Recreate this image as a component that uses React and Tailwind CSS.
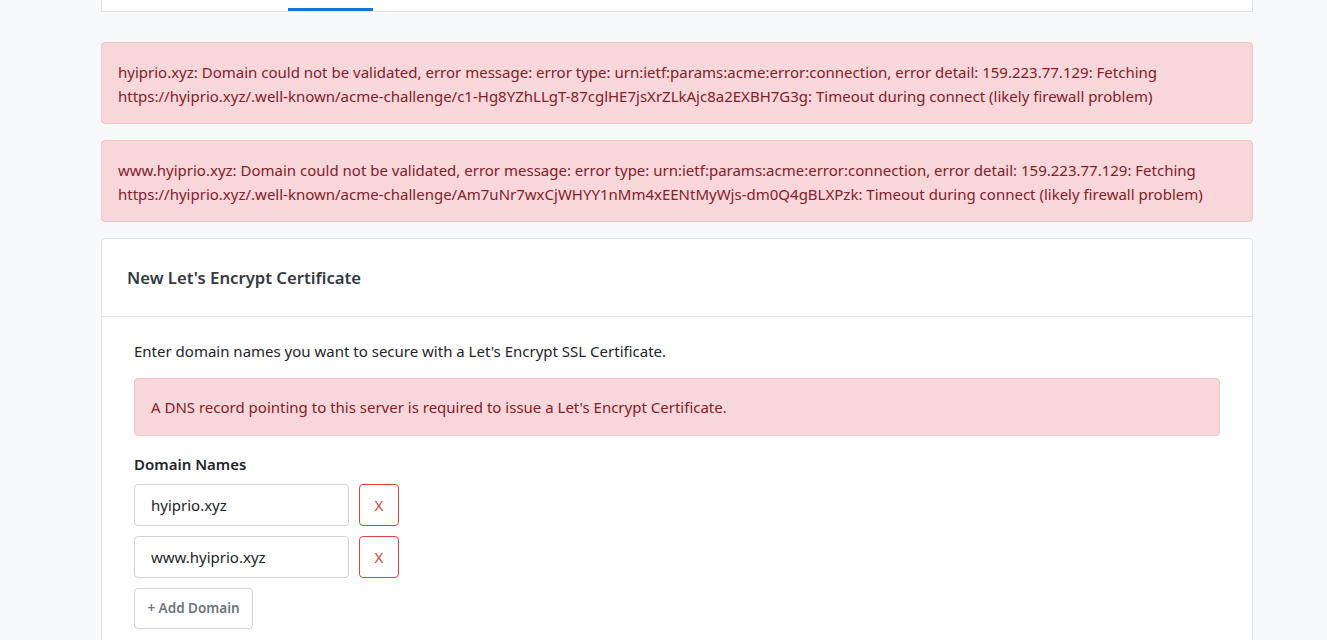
import React from "react";

const font = { fontFamily: '"Noto Sans", "Open Sans", Arial, sans-serif' };

function Alert({ children, className = "" }) {
  return (
    <div className={`rounded border border-[#f5c2c7] bg-[#f8d7da] text-[#842029] ${className}`}>
      {children}
    </div>
  );
}

export default function App() {
  return (
    <div className="min-h-[640px] h-[640px] overflow-hidden bg-[#f8f9fb] text-[#212529]" style={font}>
      <div className="mx-[101px] w-[1152px]">
        <div className="h-[12px] border-x border-b border-[#dee2e6] bg-white flex">
          <div className="ml-[186px] w-[85px] h-[3px] mt-[8px] bg-[#1a73d0]"></div>
        </div>

        <Alert className="mt-[30px] px-[16px] pt-[17px] pb-[15px] text-[15px] leading-[24px]">
          hyiprio.xyz: Domain could not be validated, error message: error type: urn:ietf:params:acme:error:connection, error detail: 159.223.77.129: Fetching
          <br />
          https://hyiprio.xyz/.well-known/acme-challenge/c1-Hg8YZhLLgT-87cglHE7jsXrZLkAjc8a2EXBH7G3g: Timeout during connect (likely firewall problem)
        </Alert>

        <Alert className="mt-[16px] px-[16px] pt-[17px] pb-[15px] text-[15px] leading-[24px]">
          www.hyiprio.xyz: Domain could not be validated, error message: error type: urn:ietf:params:acme:error:connection, error detail: 159.223.77.129: Fetching
          <br />
          https://hyiprio.xyz/.well-known/acme-challenge/Am7uNr7wxCjWHYY1nMm4xEENtMyWjs-dm0Q4gBLXPzk: Timeout during connect (likely firewall problem)
        </Alert>

        <div className="mt-[16px] rounded-t border border-[#dee2e6] bg-white h-[410px]">
          <div className="h-[78px] border-b border-[#dee2e6] px-[25px] flex items-center">
            <h2 className="text-[16.7px] font-semibold text-[#343a40]">New Let's Encrypt Certificate</h2>
          </div>
          <div className="px-[32px] pt-[23px]">
            <p className="text-[15px] leading-[22px]">
              Enter domain names you want to secure with a Let's Encrypt SSL Certificate.
            </p>
            <Alert className="mt-[16px] h-[58px] px-[16px] flex items-center text-[15px]">
              A DNS record pointing to this server is required to issue a Let's Encrypt Certificate.
            </Alert>
            <div className="mt-[17px] text-[15px] font-semibold leading-[22px]">Domain Names</div>
            <div className="mt-[9px] flex flex-col gap-[10px]">
              {["hyiprio.xyz", "www.hyiprio.xyz"].map((d) => (
                <div key={d} className="flex gap-[10px]">
                  <div className="w-[215px] h-[42px] rounded border border-[#ced4da] px-[16px] flex items-center text-[15px]">
                    {d}
                  </div>
                  <button className="w-[40px] h-[42px] rounded border border-[#d9453a] text-[#d9453a] text-[15px] flex items-center justify-center">
                    X
                  </button>
                </div>
              ))}
              <button className="w-[119px] h-[41px] rounded border border-[#ced4da] text-[#6c757d] text-[13.5px] font-semibold flex items-center justify-center">
                + Add Domain
              </button>
            </div>
          </div>
        </div>
      </div>
    </div>
  );
}
